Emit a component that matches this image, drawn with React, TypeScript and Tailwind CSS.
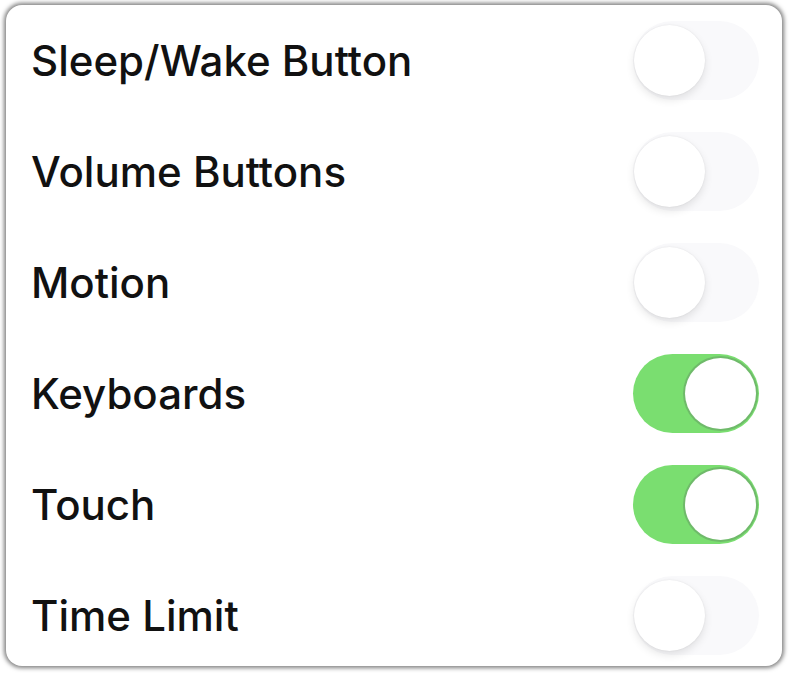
import { useState } from "react";

type Row = { label: string; on: boolean };

const initialRows: Row[] = [
  { label: "Sleep/Wake Button", on: false },
  { label: "Volume Buttons", on: false },
  { label: "Motion", on: false },
  { label: "Keyboards", on: true },
  { label: "Touch", on: true },
  { label: "Time Limit", on: false },
];

function Switch({ on, onToggle }: { on: boolean; onToggle: () => void }) {
  return (
    <button
      type="button"
      role="switch"
      aria-checked={on}
      onClick={onToggle}
      className={`relative h-[79px] w-[126px] shrink-0 rounded-full transition-colors ${
        on ? "bg-[#7ade70]" : "bg-[#f9f9fb]"
      }`}
    >
      <span
        className={`absolute top-[4px] h-[71px] w-[71px] rounded-full bg-white transition-all ${
          on
            ? "left-[52px] shadow-[0_0_0_2px_rgba(100,150,100,0.5)]"
            : "left-[1px] shadow-[0_4px_8px_rgba(0,0,0,0.1),0_0_2px_rgba(0,0,0,0.08)]"
        }`}
      />
    </button>
  );
}

export default function App() {
  const [rows, setRows] = useState(initialRows);

  const toggle = (i: number) =>
    setRows((prev) =>
      prev.map((r, idx) => (idx === i ? { ...r, on: !r.on } : r))
    );

  return (
    <div className="h-[675px] w-[789px] bg-white pl-[6px] pt-[5px]">
      <div className="h-[661px] w-[776px] overflow-hidden rounded-[16px] bg-white shadow-[0_0_4px_2px_rgba(0,0,0,0.5)]">
        {rows.map((r, i) => (
          <div
            key={r.label}
            className="flex h-[111px] items-center justify-between pl-[25px] pr-[23px]"
          >
            <span
              className="text-[42px] font-medium leading-none text-[#111111]"
              style={{ fontFamily: "Inter, 'Liberation Sans', sans-serif" }}
            >
              {r.label}
            </span>
            <Switch on={r.on} onToggle={() => toggle(i)} />
          </div>
        ))}
      </div>
    </div>
  );
}
